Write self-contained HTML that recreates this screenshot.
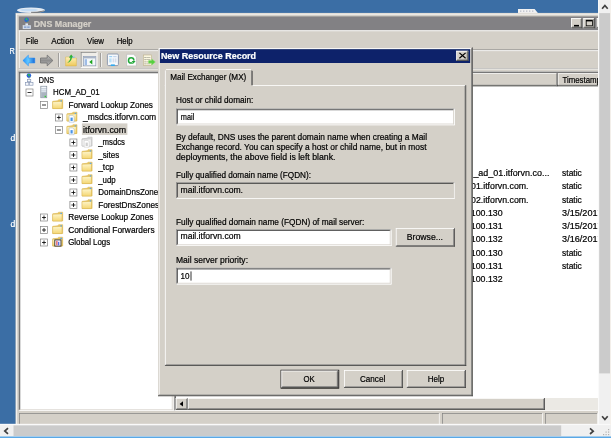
<!DOCTYPE html>
<html><head><meta charset="utf-8"><title>DNS Manager - New Resource Record</title>
<style>
html,body{margin:0;padding:0;background:#3a6ea5;overflow:hidden}
svg{display:block;will-change:transform;font-family:"Liberation Sans",sans-serif}
text{white-space:pre}
</style></head><body>
<svg width="611" height="438" viewBox="0 0 611 438">
<defs><filter id="soft" filterUnits="userSpaceOnUse" x="-20" y="-20" width="651" height="478"><feGaussianBlur stdDeviation="0.35"/></filter></defs>
<g filter="url(#soft)">
<rect x="-20.00" y="-20.00" width="651.00" height="478.00" fill="#3a6ea5" />
<text x="9.60" y="53.60" fill="#fff" stroke="#fff" stroke-width="0.2" font-size="8.7" textLength="5.20" lengthAdjust="spacingAndGlyphs" >R</text>
<text x="10.40" y="140.60" fill="#fff" stroke="#fff" stroke-width="0.2" font-size="8.7" textLength="4.80" lengthAdjust="spacingAndGlyphs" >d</text>
<text x="10.60" y="226.80" fill="#fff" stroke="#fff" stroke-width="0.2" font-size="8.7" textLength="4.80" lengthAdjust="spacingAndGlyphs" >d</text>
<ellipse cx="31" cy="10.3" rx="14" ry="2.8" fill="#e4ebf3"/><ellipse cx="29" cy="10" rx="9" ry="1.3" fill="#c4dcf4"/><path d="M31 12.4 Q38 13.4 44.5 10.8 Q40 12.2 31 12.4Z" fill="#555" stroke="#666" stroke-width="0.5"/>
<path d="M518 13.4 L518 9 L534.6 9 L538.3 13.4 Z" fill="#f2f2f2"/><path d="M520 11.2 L534 11.2" stroke="#b8bcc8" stroke-width="1.2" stroke-dasharray="1.4 1.6"/>
<rect x="15.50" y="12.90" width="584.50" height="412.10" fill="#d4d0c8" />
<rect x="16.30" y="13.70" width="583.70" height="0.80" fill="#ffffff" />
<rect x="16.30" y="13.70" width="0.80" height="411.30" fill="#ffffff" />
<rect x="18.80" y="16.40" width="579.20" height="13.80" fill="#828184" />
<text x="33.70" y="26.80" fill="#d4d0c8" stroke="#d4d0c8" stroke-width="0.2" font-size="8.7" font-weight="bold" textLength="57.60" lengthAdjust="spacingAndGlyphs" >DNS Manager</text>
<rect x="571.20" y="18.10" width="11.00" height="10.10" fill="#d4d0c8" />
<rect x="571.20" y="18.10" width="11.00" height="0.80" fill="#ffffff" />
<rect x="571.20" y="18.10" width="0.80" height="10.10" fill="#ffffff" />
<rect x="572.00" y="26.60" width="9.40" height="0.80" fill="#808080" />
<rect x="580.60" y="18.90" width="0.80" height="8.50" fill="#808080" />
<rect x="571.20" y="27.40" width="11.00" height="0.80" fill="#404040" />
<rect x="581.40" y="18.10" width="0.80" height="10.10" fill="#404040" />
<rect x="574.00" y="24.90" width="5.00" height="1.60" fill="#000" />
<rect x="583.40" y="18.10" width="11.40" height="10.10" fill="#d4d0c8" />
<rect x="583.40" y="18.10" width="11.40" height="0.80" fill="#ffffff" />
<rect x="583.40" y="18.10" width="0.80" height="10.10" fill="#ffffff" />
<rect x="584.20" y="26.60" width="9.80" height="0.80" fill="#808080" />
<rect x="593.20" y="18.90" width="0.80" height="8.50" fill="#808080" />
<rect x="583.40" y="27.40" width="11.40" height="0.80" fill="#404040" />
<rect x="594.00" y="18.10" width="0.80" height="10.10" fill="#404040" />
<rect x="585.80" y="19.80" width="7.00" height="6.40" fill="#000" />
<rect x="586.60" y="21.40" width="5.40" height="4.00" fill="#d4d0c8" />
<rect x="596.80" y="18.10" width="11.00" height="10.10" fill="#d4d0c8" />
<rect x="596.80" y="18.10" width="11.00" height="0.80" fill="#ffffff" />
<rect x="596.80" y="18.10" width="0.80" height="10.10" fill="#ffffff" />
<rect x="597.60" y="26.60" width="9.40" height="0.80" fill="#808080" />
<rect x="606.20" y="18.90" width="0.80" height="8.50" fill="#808080" />
<rect x="596.80" y="27.40" width="11.00" height="0.80" fill="#404040" />
<rect x="607.00" y="18.10" width="0.80" height="10.10" fill="#404040" />
<g><circle cx="26.6" cy="19.8" r="2.3" fill="#2a62d8"/><path d="M25.3 18.6 Q26.7 17.8 27.7 19 Q27.1 20.6 25.9 20.2 Z M26.7 20.8 Q28.1 20.4 28.3 21.2 Q27.3 22.2 26.7 20.8Z" fill="#30c848"/><rect x="25.4" y="23.4" width="2.6" height="2" fill="#dfe8f4"/><rect x="23" y="25.6" width="7.6" height="3.2" fill="#c9d6ea" stroke="#e8eef8" stroke-width="0.5"/><rect x="24" y="26.4" width="2.4" height="1.6" fill="#8fa8d0"/><rect x="27.2" y="26.4" width="2.4" height="1.6" fill="#8fa8d0"/></g>
<rect x="18.80" y="30.40" width="579.80" height="0.80" fill="#ffffff" />
<text x="25.70" y="44.30" fill="#000" stroke="#000" stroke-width="0.2" font-size="8.7" textLength="12.60" lengthAdjust="spacingAndGlyphs" >File</text>
<text x="51.30" y="44.30" fill="#000" stroke="#000" stroke-width="0.2" font-size="8.7" textLength="22.70" lengthAdjust="spacingAndGlyphs" >Action</text>
<text x="87.10" y="44.30" fill="#000" stroke="#000" stroke-width="0.2" font-size="8.7" textLength="16.90" lengthAdjust="spacingAndGlyphs" >View</text>
<text x="116.70" y="44.30" fill="#000" stroke="#000" stroke-width="0.2" font-size="8.7" textLength="16.00" lengthAdjust="spacingAndGlyphs" >Help</text>
<rect x="18.80" y="49.50" width="579.80" height="0.80" fill="#808080" />
<rect x="18.80" y="50.30" width="579.80" height="0.80" fill="#ffffff" />
<rect x="18.80" y="68.00" width="579.80" height="0.60" fill="#808080" />
<rect x="18.80" y="68.60" width="579.80" height="0.80" fill="#ffffff" />
<rect x="19.40" y="31.00" width="0.60" height="37.00" fill="#ffffff" />
<defs><linearGradient id="gb" x1="0" x2="1" y1="0" y2="0"><stop offset="0" stop-color="#1e90ff"/><stop offset="0.45" stop-color="#63c8ff"/><stop offset="1" stop-color="#1668d8"/></linearGradient><linearGradient id="gg" x1="0" x2="0" y1="0" y2="1"><stop offset="0" stop-color="#c8c8c8"/><stop offset="0.5" stop-color="#8e8e8e"/><stop offset="1" stop-color="#b8b8b8"/></linearGradient><linearGradient id="gf" x1="0" x2="0" y1="0" y2="1"><stop offset="0" stop-color="#fdf0b8"/><stop offset="1" stop-color="#efc95a"/></linearGradient></defs>
<path d="M22.9 60.5 L28.4 55.1 L28.4 58 L34.8 58 L34.8 63 L28.4 63 L28.4 65.9 Z" fill="url(#gb)" stroke="#2a8cf0" stroke-width="0.5"/>
<path d="M52.9 60.5 L47.2 55.1 L47.2 58 L40.5 58 L40.5 63 L47.2 63 L47.2 65.9 Z" fill="url(#gg)" stroke="#707070" stroke-width="0.8"/>
<rect x="58.40" y="53.00" width="0.70" height="14.00" fill="#808080" />
<rect x="59.10" y="53.00" width="0.70" height="14.00" fill="#ffffff" />
<path d="M65.6 57 L69.2 57 L70 58 L76.4 58 L76.4 65.9 L65.6 65.9 Z" fill="url(#gf)" stroke="#d8b450" stroke-width="0.5"/>
<path d="M67.2 62.8 C69.2 61.6 70.2 60 70.4 57.6 L68.8 57.6 L71.2 54.6 L73.6 57.6 L72 57.6 C71.6 60.6 70 62.4 67.2 62.8 Z" fill="#2cb234"/>
<path d="M72 57.2 L75 57.2" stroke="#7ac0f0" stroke-width="0.8"/>
<rect x="80.80" y="52.00" width="16.00" height="15.50" fill="#efede8" />
<rect x="80.80" y="52.00" width="16.00" height="0.70" fill="#808080" />
<rect x="80.80" y="52.00" width="0.70" height="15.50" fill="#808080" />
<rect x="80.80" y="67.20" width="16.60" height="0.90" fill="#ffffff" />
<rect x="96.60" y="52.00" width="0.90" height="15.80" fill="#ffffff" />
<rect x="83.60" y="56.40" width="12.20" height="9.40" fill="#f4f7fb" stroke="#8a9ab4" stroke-width="0.7"/>
<rect x="83.60" y="56.40" width="12.20" height="2.00" fill="#a9b4c6" />
<rect x="84.60" y="59.20" width="2.40" height="5.80" fill="#9fbce6" />
<path d="M92.3 59.6 L92.3 64.4 L89.3 62 Z" fill="#1ea41e"/>
<rect x="100.40" y="53.00" width="0.70" height="14.00" fill="#808080" />
<rect x="101.10" y="53.00" width="0.70" height="14.00" fill="#ffffff" />
<rect x="107.40" y="54.00" width="11.00" height="11.60" fill="#f6f9fc" stroke="#8894aa" stroke-width="0.9" rx="1.2"/>
<rect x="109.20" y="56.00" width="3.00" height="1.20" fill="#9ad0f4" />
<rect x="113.20" y="56.00" width="3.40" height="1.20" fill="#c4d4ec" />
<rect x="109.20" y="58.40" width="2.40" height="4.00" fill="#b8e0f8" />
<rect x="112.60" y="58.40" width="1.60" height="4.00" fill="#d4dcec" />
<rect x="114.80" y="58.40" width="1.60" height="4.00" fill="#d4dcec" />
<rect x="110.80" y="64.40" width="4.00" height="1.60" fill="#2fa8ee" />
<path d="M126.6 54.3 L133.6 54.3 L136.4 57 L136.4 65.9 L126.6 65.9 Z" fill="#fdfdfd" stroke="#b4b4b4" stroke-width="0.6"/>
<circle cx="131.2" cy="60.4" r="2.7" fill="none" stroke="#22a83a" stroke-width="1.5"/>
<rect x="132.40" y="60.60" width="3.00" height="2.40" fill="#fdfdfd" />
<path d="M131.6 61 L135.6 61 L133.6 63.6 Z" fill="#22a83a"/>
<rect x="143.40" y="55.00" width="8.20" height="10.40" fill="#fbf7e0" stroke="#bcb08a" stroke-width="0.6"/>
<rect x="144.60" y="57.00" width="0.90" height="0.90" fill="#606060" />
<rect x="146.20" y="57.20" width="4.20" height="0.60" fill="#9a9a8a" />
<rect x="144.60" y="59.20" width="0.90" height="0.90" fill="#606060" />
<rect x="146.20" y="59.40" width="4.20" height="0.60" fill="#9a9a8a" />
<rect x="144.60" y="61.40" width="0.90" height="0.90" fill="#606060" />
<rect x="146.20" y="61.60" width="4.20" height="0.60" fill="#9a9a8a" />
<rect x="144.60" y="63.40" width="0.90" height="0.90" fill="#606060" />
<rect x="146.20" y="63.60" width="4.20" height="0.60" fill="#9a9a8a" />
<path d="M148.6 60.6 L151.8 60.6 L151.8 58.9 L155.4 61.9 L151.8 64.9 L151.8 63.2 L148.6 63.2 Z" fill="#56cf40" stroke="#8ee070" stroke-width="0.5"/>
<rect x="18.60" y="71.60" width="154.80" height="339.40" fill="#fff" />
<rect x="18.60" y="71.60" width="154.80" height="0.80" fill="#808080" />
<rect x="18.60" y="71.60" width="0.80" height="339.40" fill="#808080" />
<rect x="19.40" y="72.40" width="153.20" height="0.80" fill="#404040" />
<rect x="19.40" y="72.40" width="0.80" height="337.80" fill="#404040" />
<rect x="18.60" y="410.20" width="154.80" height="0.80" fill="#ffffff" />
<rect x="172.60" y="71.60" width="0.80" height="339.40" fill="#ffffff" />
<rect x="19.40" y="409.40" width="153.20" height="0.80" fill="#d4d0c8" />
<rect x="171.80" y="72.40" width="0.80" height="337.80" fill="#d4d0c8" />
<defs><linearGradient id="gf2" x1="0" x2="0" y1="0" y2="1"><stop offset="0" stop-color="#fef6cc"/><stop offset="1" stop-color="#f4d672"/></linearGradient></defs>
<g><circle cx="28.9" cy="75.6" r="2.3" fill="#2a62d8"/><path d="M27.6 74.4 Q29 73.6 30 74.8 Q29.4 76.4 28.2 76 Z M29 76.6 Q30.4 76.2 30.6 77 Q29.6 78 29 76.6Z" fill="#30c040"/><rect x="28.7" y="77.8" width="0.7" height="1.6" fill="#8090b0"/><rect x="27.4" y="79.3" width="3.4" height="2.4" fill="#f4f7fb" stroke="#8090b0" stroke-width="0.6"/><rect x="25.4" y="82.4" width="3.4" height="2.8" fill="#f4f7fb" stroke="#8090b0" stroke-width="0.6"/><rect x="29.6" y="82.4" width="3.4" height="2.8" fill="#f4f7fb" stroke="#8090b0" stroke-width="0.6"/></g>
<text x="38.80" y="82.60" fill="#000" stroke="#000" stroke-width="0.2" font-size="8.7" textLength="15.20" lengthAdjust="spacingAndGlyphs" >DNS</text>
<rect x="26.00" y="89.00" width="7.00" height="7.00" fill="#fff" stroke="#808080" stroke-width="0.7"/>
<rect x="27.50" y="92.10" width="4.00" height="0.80" fill="#000" />
<rect x="40.80" y="86.20" width="6.00" height="11.60" fill="#c4ccd6" stroke="#7c8794" stroke-width="0.6"/>
<rect x="41.40" y="86.80" width="4.80" height="1.20" fill="#f4f8fc" />
<rect x="41.40" y="88.80" width="4.80" height="1.00" fill="#e8f0f8" />
<rect x="41.40" y="90.60" width="4.80" height="1.00" fill="#e8f0f8" />
<rect x="41.40" y="92.40" width="4.80" height="4.80" fill="#aab4c0" />
<rect x="44.60" y="95.80" width="1.50" height="1.40" fill="#30d030" />
<text x="53.10" y="95.20" fill="#000" stroke="#000" stroke-width="0.2" font-size="8.7" textLength="46.50" lengthAdjust="spacingAndGlyphs" >HCM_AD_01</text>
<rect x="40.50" y="101.50" width="7.00" height="7.00" fill="#fff" stroke="#808080" stroke-width="0.7"/>
<rect x="42.00" y="104.60" width="4.00" height="0.80" fill="#000" />
<path d="M52.8 101.3 L57.8 100.7 L58.6 99.7 L62.7 99.7 L62.7 108.5 L52.8 108.5 Z" fill="#e9c763" stroke="#d9b24c" stroke-width="0.5"/>
<path d="M52.6 101.7 L62.0 101.4 L62.0 108.6 L52.6 108.6 Z" fill="url(#gf2)" stroke="#d9b24c" stroke-width="0.5"/>
<rect x="60.40" y="100.30" width="1.60" height="1.20" fill="#58a8f0" />
<text x="68.40" y="107.70" fill="#000" stroke="#000" stroke-width="0.2" font-size="8.7" textLength="84.50" lengthAdjust="spacingAndGlyphs" >Forward Lookup Zones</text>
<rect x="55.40" y="114.00" width="7.00" height="7.00" fill="#fff" stroke="#808080" stroke-width="0.7"/>
<rect x="56.90" y="117.10" width="4.00" height="0.80" fill="#000" />
<rect x="58.50" y="115.50" width="0.80" height="4.00" fill="#000" />
<path d="M67.1 113.8 L72.1 113.2 L72.9 112.2 L77.0 112.2 L77.0 121.0 L67.1 121.0 Z" fill="#e9c763" stroke="#d9b24c" stroke-width="0.5"/>
<path d="M66.9 114.2 L76.3 113.9 L76.3 121.1 L66.9 121.1 Z" fill="url(#gf2)" stroke="#d9b24c" stroke-width="0.5"/>
<rect x="74.70" y="112.80" width="1.60" height="1.20" fill="#58a8f0" />
<path d="M69.1 115.4 L72.7 115.4 L74.1 116.8 L74.1 122.2 L69.1 122.2 Z" fill="#fff" stroke="#9ab0cc" stroke-width="0.5"/>
<rect x="70.50" y="117.60" width="2.20" height="3.40" fill="#4a94e8" />
<text x="83.00" y="120.20" fill="#000" stroke="#000" stroke-width="0.2" font-size="8.7" textLength="73.20" lengthAdjust="spacingAndGlyphs" >_msdcs.itforvn.com</text>
<rect x="55.40" y="126.50" width="7.00" height="7.00" fill="#fff" stroke="#808080" stroke-width="0.7"/>
<rect x="56.90" y="129.60" width="4.00" height="0.80" fill="#000" />
<path d="M67.1 126.3 L72.1 125.7 L72.9 124.7 L77.0 124.7 L77.0 133.5 L67.1 133.5 Z" fill="#e9c763" stroke="#d9b24c" stroke-width="0.5"/>
<path d="M66.9 126.7 L76.3 126.4 L76.3 133.6 L66.9 133.6 Z" fill="url(#gf2)" stroke="#d9b24c" stroke-width="0.5"/>
<rect x="74.70" y="125.30" width="1.60" height="1.20" fill="#58a8f0" />
<path d="M69.1 127.9 L72.7 127.9 L74.1 129.3 L74.1 134.7 L69.1 134.7 Z" fill="#fff" stroke="#9ab0cc" stroke-width="0.5"/>
<rect x="70.50" y="130.10" width="2.20" height="3.40" fill="#4a94e8" />
<rect x="81.90" y="123.40" width="45.50" height="11.50" fill="#d4d0c8" />
<text x="83.00" y="132.70" fill="#000" stroke="#000" stroke-width="0.2" font-size="8.7" textLength="43.00" lengthAdjust="spacingAndGlyphs" >itforvn.com</text>
<rect x="69.90" y="139.00" width="7.00" height="7.00" fill="#fff" stroke="#808080" stroke-width="0.7"/>
<rect x="71.40" y="142.10" width="4.00" height="0.80" fill="#000" />
<rect x="73.00" y="140.50" width="0.80" height="4.00" fill="#000" />
<path d="M82.2 138.8 L87.2 138.2 L88.0 137.2 L92.1 137.2 L92.1 146.0 L82.2 146.0 Z" fill="#dcdcdc" stroke="#b4b4b4" stroke-width="0.5"/>
<path d="M82.0 139.2 L91.4 138.9 L91.4 146.1 L82.0 146.1 Z" fill="#f2f2f2" stroke="#b4b4b4" stroke-width="0.5"/>
<rect x="89.80" y="137.80" width="1.60" height="1.20" fill="#d8d8d8" />
<path d="M84.2 140.4 L87.8 140.4 L89.2 141.8 L89.2 147.2 L84.2 147.2 Z" fill="#fff" stroke="#c0c0c0" stroke-width="0.5"/>
<rect x="85.60" y="142.60" width="2.20" height="3.40" fill="#cfcfcf" />
<text x="98.20" y="145.20" fill="#000" stroke="#000" stroke-width="0.2" font-size="8.7" textLength="26.80" lengthAdjust="spacingAndGlyphs" >_msdcs</text>
<rect x="69.90" y="151.50" width="7.00" height="7.00" fill="#fff" stroke="#808080" stroke-width="0.7"/>
<rect x="71.40" y="154.60" width="4.00" height="0.80" fill="#000" />
<rect x="73.00" y="153.00" width="0.80" height="4.00" fill="#000" />
<path d="M82.2 151.3 L87.2 150.7 L88.0 149.7 L92.1 149.7 L92.1 158.5 L82.2 158.5 Z" fill="#e9c763" stroke="#d9b24c" stroke-width="0.5"/>
<path d="M82.0 151.7 L91.4 151.4 L91.4 158.6 L82.0 158.6 Z" fill="url(#gf2)" stroke="#d9b24c" stroke-width="0.5"/>
<rect x="89.80" y="150.30" width="1.60" height="1.20" fill="#58a8f0" />
<text x="98.20" y="157.70" fill="#000" stroke="#000" stroke-width="0.2" font-size="8.7" textLength="21.00" lengthAdjust="spacingAndGlyphs" >_sites</text>
<rect x="69.90" y="164.00" width="7.00" height="7.00" fill="#fff" stroke="#808080" stroke-width="0.7"/>
<rect x="71.40" y="167.10" width="4.00" height="0.80" fill="#000" />
<rect x="73.00" y="165.50" width="0.80" height="4.00" fill="#000" />
<path d="M82.2 163.8 L87.2 163.2 L88.0 162.2 L92.1 162.2 L92.1 171.0 L82.2 171.0 Z" fill="#e9c763" stroke="#d9b24c" stroke-width="0.5"/>
<path d="M82.0 164.2 L91.4 163.9 L91.4 171.1 L82.0 171.1 Z" fill="url(#gf2)" stroke="#d9b24c" stroke-width="0.5"/>
<rect x="89.80" y="162.80" width="1.60" height="1.20" fill="#58a8f0" />
<text x="98.20" y="170.20" fill="#000" stroke="#000" stroke-width="0.2" font-size="8.7" textLength="15.80" lengthAdjust="spacingAndGlyphs" >_tcp</text>
<rect x="69.90" y="176.50" width="7.00" height="7.00" fill="#fff" stroke="#808080" stroke-width="0.7"/>
<rect x="71.40" y="179.60" width="4.00" height="0.80" fill="#000" />
<rect x="73.00" y="178.00" width="0.80" height="4.00" fill="#000" />
<path d="M82.2 176.3 L87.2 175.7 L88.0 174.7 L92.1 174.7 L92.1 183.5 L82.2 183.5 Z" fill="#e9c763" stroke="#d9b24c" stroke-width="0.5"/>
<path d="M82.0 176.7 L91.4 176.4 L91.4 183.6 L82.0 183.6 Z" fill="url(#gf2)" stroke="#d9b24c" stroke-width="0.5"/>
<rect x="89.80" y="175.30" width="1.60" height="1.20" fill="#58a8f0" />
<text x="98.20" y="182.70" fill="#000" stroke="#000" stroke-width="0.2" font-size="8.7" textLength="17.50" lengthAdjust="spacingAndGlyphs" >_udp</text>
<rect x="69.90" y="189.00" width="7.00" height="7.00" fill="#fff" stroke="#808080" stroke-width="0.7"/>
<rect x="71.40" y="192.10" width="4.00" height="0.80" fill="#000" />
<rect x="73.00" y="190.50" width="0.80" height="4.00" fill="#000" />
<path d="M82.2 188.8 L87.2 188.2 L88.0 187.2 L92.1 187.2 L92.1 196.0 L82.2 196.0 Z" fill="#e9c763" stroke="#d9b24c" stroke-width="0.5"/>
<path d="M82.0 189.2 L91.4 188.9 L91.4 196.1 L82.0 196.1 Z" fill="url(#gf2)" stroke="#d9b24c" stroke-width="0.5"/>
<rect x="89.80" y="187.80" width="1.60" height="1.20" fill="#58a8f0" />
<text x="98.20" y="195.20" fill="#000" stroke="#000" stroke-width="0.2" font-size="8.7" textLength="64.00" lengthAdjust="spacingAndGlyphs" >DomainDnsZones</text>
<rect x="69.90" y="201.50" width="7.00" height="7.00" fill="#fff" stroke="#808080" stroke-width="0.7"/>
<rect x="71.40" y="204.60" width="4.00" height="0.80" fill="#000" />
<rect x="73.00" y="203.00" width="0.80" height="4.00" fill="#000" />
<path d="M82.2 201.3 L87.2 200.7 L88.0 199.7 L92.1 199.7 L92.1 208.5 L82.2 208.5 Z" fill="#e9c763" stroke="#d9b24c" stroke-width="0.5"/>
<path d="M82.0 201.7 L91.4 201.4 L91.4 208.6 L82.0 208.6 Z" fill="url(#gf2)" stroke="#d9b24c" stroke-width="0.5"/>
<rect x="89.80" y="200.30" width="1.60" height="1.20" fill="#58a8f0" />
<text x="98.20" y="207.70" fill="#000" stroke="#000" stroke-width="0.2" font-size="8.7" textLength="61.00" lengthAdjust="spacingAndGlyphs" >ForestDnsZones</text>
<rect x="40.50" y="214.00" width="7.00" height="7.00" fill="#fff" stroke="#808080" stroke-width="0.7"/>
<rect x="42.00" y="217.10" width="4.00" height="0.80" fill="#000" />
<rect x="43.60" y="215.50" width="0.80" height="4.00" fill="#000" />
<path d="M52.8 213.8 L57.8 213.2 L58.6 212.2 L62.7 212.2 L62.7 221.0 L52.8 221.0 Z" fill="#e9c763" stroke="#d9b24c" stroke-width="0.5"/>
<path d="M52.6 214.2 L62.0 213.9 L62.0 221.1 L52.6 221.1 Z" fill="url(#gf2)" stroke="#d9b24c" stroke-width="0.5"/>
<rect x="60.40" y="212.80" width="1.60" height="1.20" fill="#58a8f0" />
<text x="68.20" y="220.20" fill="#000" stroke="#000" stroke-width="0.2" font-size="8.7" textLength="85.20" lengthAdjust="spacingAndGlyphs" >Reverse Lookup Zones</text>
<rect x="40.50" y="226.50" width="7.00" height="7.00" fill="#fff" stroke="#808080" stroke-width="0.7"/>
<rect x="42.00" y="229.60" width="4.00" height="0.80" fill="#000" />
<rect x="43.60" y="228.00" width="0.80" height="4.00" fill="#000" />
<path d="M52.8 226.3 L57.8 225.7 L58.6 224.7 L62.7 224.7 L62.7 233.5 L52.8 233.5 Z" fill="#e9c763" stroke="#d9b24c" stroke-width="0.5"/>
<path d="M52.6 226.7 L62.0 226.4 L62.0 233.6 L52.6 233.6 Z" fill="url(#gf2)" stroke="#d9b24c" stroke-width="0.5"/>
<rect x="60.40" y="225.30" width="1.60" height="1.20" fill="#58a8f0" />
<text x="68.20" y="232.70" fill="#000" stroke="#000" stroke-width="0.2" font-size="8.7" textLength="86.40" lengthAdjust="spacingAndGlyphs" >Conditional Forwarders</text>
<rect x="40.50" y="239.00" width="7.00" height="7.00" fill="#fff" stroke="#808080" stroke-width="0.7"/>
<rect x="42.00" y="242.10" width="4.00" height="0.80" fill="#000" />
<rect x="43.60" y="240.50" width="0.80" height="4.00" fill="#000" />
<path d="M52.8 238.8 L57.8 238.2 L58.6 237.2 L62.7 237.2 L62.7 246.0 L52.8 246.0 Z" fill="#e9c763" stroke="#d9b24c" stroke-width="0.5"/>
<path d="M52.6 239.2 L62.0 238.9 L62.0 246.1 L52.6 246.1 Z" fill="url(#gf2)" stroke="#d9b24c" stroke-width="0.5"/>
<rect x="60.40" y="237.80" width="1.60" height="1.20" fill="#58a8f0" />
<rect x="54.40" y="239.50" width="7.00" height="7.00" fill="#202020" />
<rect x="55.20" y="240.30" width="5.40" height="5.40" fill="#f0f0ff" />
<rect x="56.40" y="240.90" width="1.00" height="4.40" fill="#e03030" />
<rect x="58.20" y="241.90" width="1.00" height="3.40" fill="#3050e0" />
<text x="68.20" y="245.20" fill="#000" stroke="#000" stroke-width="0.2" font-size="8.7" textLength="42.00" lengthAdjust="spacingAndGlyphs" >Global Logs</text>
<rect x="174.20" y="71.60" width="425.80" height="339.40" fill="#fff" />
<rect x="174.20" y="71.60" width="425.80" height="0.80" fill="#808080" />
<rect x="174.20" y="71.60" width="0.80" height="339.40" fill="#808080" />
<rect x="175.00" y="72.40" width="424.20" height="0.80" fill="#404040" />
<rect x="175.00" y="72.40" width="0.80" height="337.80" fill="#404040" />
<rect x="174.20" y="410.20" width="425.80" height="0.80" fill="#ffffff" />
<rect x="599.20" y="71.60" width="0.80" height="339.40" fill="#ffffff" />
<rect x="175.00" y="409.40" width="424.20" height="0.80" fill="#d4d0c8" />
<rect x="598.40" y="72.40" width="0.80" height="337.80" fill="#d4d0c8" />
<rect x="175.80" y="73.20" width="424.20" height="13.00" fill="#d4d0c8" />
<rect x="175.80" y="73.20" width="424.20" height="0.60" fill="#ffffff" />
<rect x="175.80" y="84.80" width="424.20" height="0.70" fill="#808080" />
<rect x="175.80" y="85.50" width="424.20" height="0.80" fill="#404040" />
<rect x="556.30" y="73.20" width="0.70" height="13.00" fill="#808080" />
<rect x="557.00" y="73.20" width="0.70" height="13.00" fill="#404040" />
<rect x="557.80" y="73.80" width="0.70" height="11.00" fill="#ffffff" />
<text x="562.50" y="83.10" fill="#000" stroke="#000" stroke-width="0.2" font-size="8.7" textLength="38.40" lengthAdjust="spacingAndGlyphs" >Timestamp</text>
<text x="473.40" y="175.90" fill="#000" stroke="#000" stroke-width="0.2" font-size="8.7" textLength="76.00" lengthAdjust="spacingAndGlyphs" >_ad_01.itforvn.co...</text>
<text x="562.10" y="175.90" fill="#000" stroke="#000" stroke-width="0.2" font-size="8.7" textLength="19.70" lengthAdjust="spacingAndGlyphs" >static</text>
<text x="471.00" y="189.20" fill="#000" stroke="#000" stroke-width="0.2" font-size="8.7" textLength="57.50" lengthAdjust="spacingAndGlyphs" >01.itforvn.com.</text>
<text x="562.10" y="189.20" fill="#000" stroke="#000" stroke-width="0.2" font-size="8.7" textLength="19.70" lengthAdjust="spacingAndGlyphs" >static</text>
<text x="471.00" y="202.50" fill="#000" stroke="#000" stroke-width="0.2" font-size="8.7" textLength="57.50" lengthAdjust="spacingAndGlyphs" >02.itforvn.com.</text>
<text x="562.10" y="202.50" fill="#000" stroke="#000" stroke-width="0.2" font-size="8.7" textLength="19.70" lengthAdjust="spacingAndGlyphs" >static</text>
<text x="470.80" y="215.80" fill="#000" stroke="#000" stroke-width="0.2" font-size="8.7" textLength="31.80" lengthAdjust="spacingAndGlyphs" >100.130</text>
<text x="562.10" y="215.80" fill="#000" stroke="#000" stroke-width="0.2" font-size="8.7" textLength="40.50" lengthAdjust="spacingAndGlyphs" >3/15/2017</text>
<text x="470.80" y="229.10" fill="#000" stroke="#000" stroke-width="0.2" font-size="8.7" textLength="31.80" lengthAdjust="spacingAndGlyphs" >100.131</text>
<text x="562.10" y="229.10" fill="#000" stroke="#000" stroke-width="0.2" font-size="8.7" textLength="40.50" lengthAdjust="spacingAndGlyphs" >3/15/2017</text>
<text x="470.80" y="242.40" fill="#000" stroke="#000" stroke-width="0.2" font-size="8.7" textLength="31.80" lengthAdjust="spacingAndGlyphs" >100.132</text>
<text x="562.10" y="242.40" fill="#000" stroke="#000" stroke-width="0.2" font-size="8.7" textLength="40.50" lengthAdjust="spacingAndGlyphs" >3/16/2017</text>
<text x="470.80" y="255.70" fill="#000" stroke="#000" stroke-width="0.2" font-size="8.7" textLength="31.80" lengthAdjust="spacingAndGlyphs" >100.130</text>
<text x="562.10" y="255.70" fill="#000" stroke="#000" stroke-width="0.2" font-size="8.7" textLength="19.70" lengthAdjust="spacingAndGlyphs" >static</text>
<text x="470.80" y="269.00" fill="#000" stroke="#000" stroke-width="0.2" font-size="8.7" textLength="31.80" lengthAdjust="spacingAndGlyphs" >100.131</text>
<text x="562.10" y="269.00" fill="#000" stroke="#000" stroke-width="0.2" font-size="8.7" textLength="19.70" lengthAdjust="spacingAndGlyphs" >static</text>
<text x="470.80" y="282.30" fill="#000" stroke="#000" stroke-width="0.2" font-size="8.7" textLength="31.80" lengthAdjust="spacingAndGlyphs" >100.132</text>
<rect x="175.80" y="398.00" width="422.80" height="12.00" fill="#ebe9e4" />
<rect x="175.80" y="398.00" width="12.00" height="11.80" fill="#d4d0c8" />
<rect x="175.80" y="398.00" width="12.00" height="0.80" fill="#ffffff" />
<rect x="175.80" y="398.00" width="0.80" height="11.80" fill="#ffffff" />
<rect x="176.60" y="408.20" width="10.40" height="0.80" fill="#808080" />
<rect x="186.20" y="398.80" width="0.80" height="10.20" fill="#808080" />
<rect x="175.80" y="409.00" width="12.00" height="0.80" fill="#404040" />
<rect x="187.00" y="398.00" width="0.80" height="11.80" fill="#404040" />
<path d="M183 401.2 L183 406.6 L179.6 403.9 Z" fill="#000"/>
<rect x="187.80" y="398.00" width="357.10" height="11.80" fill="#d4d0c8" />
<rect x="187.80" y="398.00" width="357.10" height="0.80" fill="#ffffff" />
<rect x="187.80" y="398.00" width="0.80" height="11.80" fill="#ffffff" />
<rect x="188.60" y="408.20" width="355.50" height="0.80" fill="#808080" />
<rect x="543.30" y="398.80" width="0.80" height="10.20" fill="#808080" />
<rect x="187.80" y="409.00" width="357.10" height="0.80" fill="#404040" />
<rect x="544.10" y="398.00" width="0.80" height="11.80" fill="#404040" />
<rect x="19.00" y="413.00" width="420.60" height="0.70" fill="#808080" />
<rect x="19.00" y="413.00" width="0.70" height="11.50" fill="#808080" />
<rect x="438.90" y="413.00" width="0.70" height="11.50" fill="#ffffff" />
<rect x="442.00" y="413.00" width="100.80" height="0.70" fill="#808080" />
<rect x="442.00" y="413.00" width="0.70" height="11.50" fill="#808080" />
<rect x="542.10" y="413.00" width="0.70" height="11.50" fill="#ffffff" />
<rect x="545.00" y="413.00" width="53.00" height="0.70" fill="#808080" />
<rect x="545.00" y="413.00" width="0.70" height="11.50" fill="#808080" />
<rect x="597.30" y="413.00" width="0.70" height="11.50" fill="#ffffff" />
<rect x="158.00" y="47.40" width="314.70" height="348.80" fill="#d4d0c8" />
<rect x="158.00" y="47.40" width="314.70" height="0.80" fill="#d4d0c8" />
<rect x="158.00" y="47.40" width="0.80" height="348.80" fill="#d4d0c8" />
<rect x="158.80" y="48.20" width="313.10" height="0.80" fill="#ffffff" />
<rect x="158.80" y="48.20" width="0.80" height="347.20" fill="#ffffff" />
<rect x="158.80" y="394.60" width="313.10" height="0.80" fill="#808080" />
<rect x="471.10" y="48.20" width="0.80" height="347.20" fill="#808080" />
<rect x="158.00" y="395.40" width="314.70" height="0.80" fill="#404040" />
<rect x="471.90" y="47.40" width="0.80" height="348.80" fill="#404040" />
<rect x="159.90" y="49.20" width="310.20" height="13.80" fill="#0a246a" />
<text x="160.90" y="59.00" fill="#fff" stroke="#fff" stroke-width="0.2" font-size="8.7" font-weight="bold" textLength="95.20" lengthAdjust="spacingAndGlyphs" >New Resource Record</text>
<rect x="456.30" y="50.80" width="12.00" height="10.20" fill="#d4d0c8" />
<rect x="456.30" y="50.80" width="12.00" height="0.80" fill="#ffffff" />
<rect x="456.30" y="50.80" width="0.80" height="10.20" fill="#ffffff" />
<rect x="457.10" y="59.40" width="10.40" height="0.80" fill="#808080" />
<rect x="466.70" y="51.60" width="0.80" height="8.60" fill="#808080" />
<rect x="456.30" y="60.20" width="12.00" height="0.80" fill="#404040" />
<rect x="467.50" y="50.80" width="0.80" height="10.20" fill="#404040" />
<path d="M459.4 52.9 L465.6 58.3 M465.6 52.9 L459.4 58.3" stroke="#000" stroke-width="1.2"/>
<rect x="164.90" y="85.00" width="301.30" height="0.80" fill="#ffffff" />
<rect x="164.90" y="85.00" width="0.80" height="281.00" fill="#ffffff" />
<rect x="165.70" y="364.40" width="299.70" height="0.80" fill="#808080" />
<rect x="464.60" y="85.80" width="0.80" height="279.40" fill="#808080" />
<rect x="164.90" y="365.20" width="301.30" height="0.80" fill="#404040" />
<rect x="465.40" y="85.00" width="0.80" height="281.00" fill="#404040" />
<rect x="164.90" y="69.20" width="87.70" height="16.80" fill="#d4d0c8" />
<rect x="165.90" y="69.20" width="85.10" height="0.80" fill="#ffffff" />
<rect x="164.90" y="70.40" width="0.80" height="15.60" fill="#ffffff" />
<rect x="251.00" y="70.40" width="0.80" height="14.80" fill="#808080" />
<rect x="251.80" y="70.80" width="0.80" height="14.40" fill="#404040" />
<text x="170.20" y="80.10" fill="#000" stroke="#000" stroke-width="0.2" font-size="8.7" textLength="76.10" lengthAdjust="spacingAndGlyphs" >Mail Exchanger (MX)</text>
<text x="176.00" y="103.40" fill="#000" stroke="#000" stroke-width="0.2" font-size="8.7" textLength="77.30" lengthAdjust="spacingAndGlyphs" >Host or child domain:</text>
<rect x="176.20" y="108.60" width="278.40" height="16.60" fill="#fff" />
<rect x="176.20" y="108.60" width="278.40" height="0.80" fill="#808080" />
<rect x="176.20" y="108.60" width="0.80" height="16.60" fill="#808080" />
<rect x="177.00" y="109.40" width="276.80" height="0.80" fill="#404040" />
<rect x="177.00" y="109.40" width="0.80" height="15.00" fill="#404040" />
<rect x="176.20" y="124.40" width="278.40" height="0.80" fill="#ffffff" />
<rect x="453.80" y="108.60" width="0.80" height="16.60" fill="#ffffff" />
<rect x="177.00" y="123.60" width="276.80" height="0.80" fill="#d4d0c8" />
<rect x="453.00" y="109.40" width="0.80" height="15.00" fill="#d4d0c8" />
<text x="180.80" y="119.70" fill="#000" stroke="#000" stroke-width="0.2" font-size="8.7" textLength="13.50" lengthAdjust="spacingAndGlyphs" >mail</text>
<text x="176.00" y="139.60" fill="#000" stroke="#000" stroke-width="0.2" font-size="8.7" textLength="251.00" lengthAdjust="spacingAndGlyphs" >By default, DNS uses the parent domain name when creating a Mail</text>
<text x="176.00" y="149.70" fill="#000" stroke="#000" stroke-width="0.2" font-size="8.7" textLength="250.50" lengthAdjust="spacingAndGlyphs" >Exchange record. You can specify a host or child name, but in most</text>
<text x="176.00" y="159.80" fill="#000" stroke="#000" stroke-width="0.2" font-size="8.7" textLength="159.50" lengthAdjust="spacingAndGlyphs" >deployments, the above field is left blank.</text>
<text x="176.00" y="177.60" fill="#000" stroke="#000" stroke-width="0.2" font-size="8.7" textLength="135.00" lengthAdjust="spacingAndGlyphs" >Fully qualified domain name (FQDN):</text>
<rect x="176.20" y="182.40" width="278.40" height="16.40" fill="#d4d0c8" />
<rect x="176.20" y="182.40" width="278.40" height="0.80" fill="#808080" />
<rect x="176.20" y="182.40" width="0.80" height="16.40" fill="#808080" />
<rect x="177.00" y="183.20" width="276.80" height="0.80" fill="#404040" />
<rect x="177.00" y="183.20" width="0.80" height="14.80" fill="#404040" />
<rect x="176.20" y="198.00" width="278.40" height="0.80" fill="#ffffff" />
<rect x="453.80" y="182.40" width="0.80" height="16.40" fill="#ffffff" />
<rect x="177.00" y="197.20" width="276.80" height="0.80" fill="#d4d0c8" />
<rect x="453.00" y="183.20" width="0.80" height="14.80" fill="#d4d0c8" />
<text x="180.50" y="192.70" fill="#000" stroke="#000" stroke-width="0.2" font-size="8.7" textLength="62.50" lengthAdjust="spacingAndGlyphs" >mail.itforvn.com.</text>
<text x="176.00" y="224.50" fill="#000" stroke="#000" stroke-width="0.2" font-size="8.7" textLength="188.40" lengthAdjust="spacingAndGlyphs" >Fully qualified domain name (FQDN) of mail server:</text>
<rect x="176.20" y="229.40" width="215.20" height="16.60" fill="#fff" />
<rect x="176.20" y="229.40" width="215.20" height="0.80" fill="#808080" />
<rect x="176.20" y="229.40" width="0.80" height="16.60" fill="#808080" />
<rect x="177.00" y="230.20" width="213.60" height="0.80" fill="#404040" />
<rect x="177.00" y="230.20" width="0.80" height="15.00" fill="#404040" />
<rect x="176.20" y="245.20" width="215.20" height="0.80" fill="#ffffff" />
<rect x="390.60" y="229.40" width="0.80" height="16.60" fill="#ffffff" />
<rect x="177.00" y="244.40" width="213.60" height="0.80" fill="#d4d0c8" />
<rect x="389.80" y="230.20" width="0.80" height="15.00" fill="#d4d0c8" />
<text x="180.50" y="239.40" fill="#000" stroke="#000" stroke-width="0.2" font-size="8.7" textLength="60.10" lengthAdjust="spacingAndGlyphs" >mail.itforvn.com</text>
<rect x="395.80" y="228.20" width="59.00" height="18.40" fill="#d4d0c8" />
<rect x="395.80" y="228.20" width="59.00" height="0.80" fill="#ffffff" />
<rect x="395.80" y="228.20" width="0.80" height="18.40" fill="#ffffff" />
<rect x="396.60" y="245.00" width="57.40" height="0.80" fill="#808080" />
<rect x="453.20" y="229.00" width="0.80" height="16.80" fill="#808080" />
<rect x="395.80" y="245.80" width="59.00" height="0.80" fill="#404040" />
<rect x="454.00" y="228.20" width="0.80" height="18.40" fill="#404040" />
<text x="406.80" y="240.30" fill="#000" stroke="#000" stroke-width="0.2" font-size="8.7" textLength="36.20" lengthAdjust="spacingAndGlyphs" >Browse...</text>
<text x="176.00" y="263.10" fill="#000" stroke="#000" stroke-width="0.2" font-size="8.7" textLength="72.00" lengthAdjust="spacingAndGlyphs" >Mail server priority:</text>
<rect x="176.20" y="267.80" width="215.20" height="16.60" fill="#fff" />
<rect x="176.20" y="267.80" width="215.20" height="0.80" fill="#808080" />
<rect x="176.20" y="267.80" width="0.80" height="16.60" fill="#808080" />
<rect x="177.00" y="268.60" width="213.60" height="0.80" fill="#404040" />
<rect x="177.00" y="268.60" width="0.80" height="15.00" fill="#404040" />
<rect x="176.20" y="283.60" width="215.20" height="0.80" fill="#ffffff" />
<rect x="390.60" y="267.80" width="0.80" height="16.60" fill="#ffffff" />
<rect x="177.00" y="282.80" width="213.60" height="0.80" fill="#d4d0c8" />
<rect x="389.80" y="268.60" width="0.80" height="15.00" fill="#d4d0c8" />
<text x="180.50" y="278.60" fill="#000" stroke="#000" stroke-width="0.2" font-size="8.7" textLength="9.00" lengthAdjust="spacingAndGlyphs" >10</text>
<rect x="190.60" y="271.40" width="0.80" height="9.20" fill="#000" />
<rect x="280.60" y="369.80" width="58.60" height="18.80" fill="#000" />
<rect x="281.40" y="370.60" width="57.00" height="17.20" fill="#d4d0c8" />
<rect x="281.40" y="370.60" width="57.00" height="0.80" fill="#ffffff" />
<rect x="281.40" y="370.60" width="0.80" height="17.20" fill="#ffffff" />
<rect x="282.20" y="386.20" width="55.40" height="0.80" fill="#808080" />
<rect x="336.80" y="371.40" width="0.80" height="15.60" fill="#808080" />
<rect x="281.40" y="387.00" width="57.00" height="0.80" fill="#404040" />
<rect x="337.60" y="370.60" width="0.80" height="17.20" fill="#404040" />
<text x="303.50" y="381.70" fill="#000" stroke="#000" stroke-width="0.2" font-size="8.7" textLength="11.20" lengthAdjust="spacingAndGlyphs" >OK</text>
<rect x="344.00" y="370.00" width="59.00" height="18.00" fill="#d4d0c8" />
<rect x="344.00" y="370.00" width="59.00" height="0.80" fill="#ffffff" />
<rect x="344.00" y="370.00" width="0.80" height="18.00" fill="#ffffff" />
<rect x="344.80" y="386.40" width="57.40" height="0.80" fill="#808080" />
<rect x="401.40" y="370.80" width="0.80" height="16.40" fill="#808080" />
<rect x="344.00" y="387.20" width="59.00" height="0.80" fill="#404040" />
<rect x="402.20" y="370.00" width="0.80" height="18.00" fill="#404040" />
<text x="360.00" y="381.70" fill="#000" stroke="#000" stroke-width="0.2" font-size="8.7" textLength="25.20" lengthAdjust="spacingAndGlyphs" >Cancel</text>
<rect x="406.80" y="370.00" width="59.00" height="18.00" fill="#d4d0c8" />
<rect x="406.80" y="370.00" width="59.00" height="0.80" fill="#ffffff" />
<rect x="406.80" y="370.00" width="0.80" height="18.00" fill="#ffffff" />
<rect x="407.60" y="386.40" width="57.40" height="0.80" fill="#808080" />
<rect x="464.20" y="370.80" width="0.80" height="16.40" fill="#808080" />
<rect x="406.80" y="387.20" width="59.00" height="0.80" fill="#404040" />
<rect x="465.00" y="370.00" width="0.80" height="18.00" fill="#404040" />
<text x="427.70" y="381.70" fill="#000" stroke="#000" stroke-width="0.2" font-size="8.7" textLength="16.50" lengthAdjust="spacingAndGlyphs" >Help</text>
<rect x="598.10" y="-20.00" width="32.90" height="478.00" fill="#f0f0f0" />
<rect x="-20.00" y="423.90" width="651.00" height="14.10" fill="#f0f0f0" />
<rect x="-20.00" y="423.90" width="651.00" height="1.20" fill="#fafafa" />
<rect x="598.10" y="-20.00" width="1.00" height="445.00" fill="#fbfbfb" />
<rect x="599.20" y="13.10" width="11.00" height="360.30" fill="#cbcbcb" />
<rect x="610.30" y="-20.00" width="10.00" height="445.00" fill="#f7f1ea" />
<rect x="13.50" y="425.40" width="547.70" height="10.60" fill="#cbcbcb" />
<path d="M8.0 428.2 L4.800000000000001 431 L8.0 433.8" fill="none" stroke="#404040" stroke-width="1.7"/>
<path d="M590.0 428.4 L593.2 431.2 L590.0 434.0" fill="none" stroke="#404040" stroke-width="1.7"/>
<path d="M602.0999999999999 8.7 L604.9 5.5 L607.7 8.7" fill="none" stroke="#404040" stroke-width="1.7"/>
<path d="M602.0999999999999 416.29999999999995 L604.9 419.5 L607.7 416.29999999999995" fill="none" stroke="#404040" stroke-width="1.7"/>
<rect x="608.00" y="434.00" width="1.20" height="1.20" fill="#b0b0b0" />
<rect x="605.50" y="434.00" width="1.20" height="1.20" fill="#b0b0b0" />
<rect x="603.00" y="434.00" width="1.20" height="1.20" fill="#b0b0b0" />
<rect x="608.00" y="431.50" width="1.20" height="1.20" fill="#b0b0b0" />
<rect x="605.50" y="431.50" width="1.20" height="1.20" fill="#b0b0b0" />
<rect x="608.00" y="429.00" width="1.20" height="1.20" fill="#b0b0b0" />
<rect x="-20.00" y="436.50" width="651.00" height="21.50" fill="#5aa8e6" />
</g>
</svg>
</body></html>
